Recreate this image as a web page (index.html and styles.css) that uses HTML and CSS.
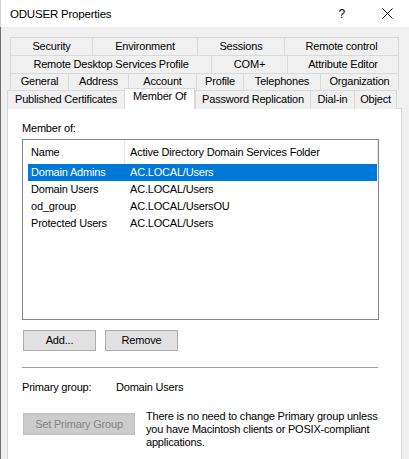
FILE: index.html
```html
<!DOCTYPE html>
<html>
<head>
<meta charset="utf-8">
<link rel="stylesheet" href="styles.css">
</head>
<body>
<div class="titlebar">
  <span class="title">ODUSER Properties</span>
  <span class="help">?</span>
  <svg class="close" width="11" height="11" viewBox="0 0 11 11"><path d="M0.5 0.5 L10.5 10.5 M10.5 0.5 L0.5 10.5" stroke="#000" stroke-width="1" fill="none"/></svg>
</div>
<div class="window">
  <div class="tabs">
    <div class="tabrow r1">
      <div class="tab">Security</div>
      <div class="tab">Environment</div>
      <div class="tab">Sessions</div>
      <div class="tab">Remote control</div>
    </div>
    <div class="tabrow r2">
      <div class="tab">Remote Desktop Services Profile</div>
      <div class="tab">COM+</div>
      <div class="tab">Attribute Editor</div>
    </div>
    <div class="tabrow r3">
      <div class="tab">General</div>
      <div class="tab">Address</div>
      <div class="tab">Account</div>
      <div class="tab">Profile</div>
      <div class="tab">Telephones</div>
      <div class="tab">Organization</div>
    </div>
    <div class="tabrow r4">
      <div class="tab">Published Certificates</div>
      <div class="tab active">Member Of</div>
      <div class="tab">Password Replication</div>
      <div class="tab">Dial-in</div>
      <div class="tab">Object</div>
    </div>
  </div>
  <div class="panel">
    <div class="label">Member of:</div>
    <div class="list">
      <div class="list-head">
        <div class="hcol first">Name</div>
        <div class="hcol">Active Directory Domain Services Folder</div>
      </div>
      <div class="rows">
        <div class="row selected"><span>Domain Admins</span><span>AC.LOCAL/Users</span></div>
        <div class="row"><span>Domain Users</span><span>AC.LOCAL/Users</span></div>
        <div class="row"><span>od_group</span><span>AC.LOCAL/UsersOU</span></div>
        <div class="row"><span>Protected Users</span><span>AC.LOCAL/Users</span></div>
      </div>
    </div>
    <div class="buttons">
      <div class="btn">Add...</div>
      <div class="btn">Remove</div>
    </div>
    <div class="sep"></div>
    <div class="primary">
      <span>Primary group:</span>
      <span>Domain Users</span>
    </div>
    <div class="setrow">
      <div class="btn disabled wide">Set Primary Group</div>
      <p class="note">There is no need to change Primary group unless<br>you have Macintosh clients or POSIX-compliant<br>applications.</p>
    </div>
  </div>
</div>
</body>
</html>
```

FILE: styles.css
```css
* { box-sizing: border-box; }
html, body { margin: 0; padding: 0; }
body {
  width: 409px;
  height: 459px;
  overflow: hidden;
  background: #f0f0f0;
  font-family: "Liberation Sans", Arial, sans-serif;
  font-size: 11px;
  letter-spacing: -0.2px;
  color: #000;
}
.titlebar {
  height: 27px;
  background: #fff;
  display: flex;
  align-items: center;
  padding-left: 9px;
  border-left: 1px solid #d0d0d0;
}
.title { font-size: 11.5px; flex: 1; }
.help { font-size: 12px; margin-right: 37px; }
.close { margin-right: 16px; }
.window {
  height: 432px;
  border-left: 1px solid #6f6f6f;
  padding-top: 10px;
}
.tabrow { display: grid; }
.r1 { margin-left: 9px; height: 18px; grid-template-columns: 82px 105px 87px 115px; }
.r2 { margin-left: 9px; height: 18px; grid-template-columns: 201px 76px 112px; }
.r3 { margin-left: 9px; height: 17px; grid-template-columns: 58px 60px 68px 47px 77px 79px; }
.r4 { margin-left: 6px; height: 18px; grid-template-columns: 117px 71px 115px 44px 43px; }
.tab {
  border-top: 1px solid #d9d9d9;
  border-left: 1px solid #d9d9d9;
  text-align: center;
  line-height: 16px;
  white-space: nowrap;
  background: #f0f0f0;
}
.tab:last-child { border-right: 1px solid #d9d9d9; }
.r3 .tab { line-height: 15px; }
.tab.active {
  position: relative;
  z-index: 1;
  align-self: start;
  height: 21px;
  margin-top: -2px;
  background: #fff;
  border-right: 1px solid #d9d9d9;
  line-height: 15px;
}
.panel {
  margin-left: 6px;
  width: 395px;
  height: 360px;
  background: #fff;
  border: 1px solid #d9d9d9;
  padding: 12px 0 0 14px;
}
.label { line-height: 14px; }
.list {
  margin-top: 4px;
  width: 357px;
  height: 181px;
  border: 1px solid #828790;
}
.list-head {
  display: grid;
  grid-template-columns: 102px 253px;
  height: 24px;
}
.hcol {
  line-height: 24px;
  padding-left: 5px;
  border-right: 1px solid #e5e5e5;
  white-space: nowrap;
}
.hcol.first { padding-left: 8px; }
.rows { margin: 0 1px 0 5px; }
.row {
  display: grid;
  grid-template-columns: 99px 1fr;
  height: 17px;
  line-height: 17px;
  padding-left: 3px;
  white-space: nowrap;
}
.row.selected { background: #0078d7; color: #fff; }
.buttons {
  display: flex;
  gap: 9px;
  margin-top: 10px;
  margin-left: 1px;
}
.btn {
  width: 73px;
  height: 21px;
  line-height: 19px;
  text-align: center;
  background: #e1e1e1;
  border: 1px solid #adadad;
  white-space: nowrap;
}
.btn.disabled {
  background: #cccccc;
  border-color: #bfbfbf;
  color: #838383;
}
.btn.wide { width: 112px; height: 22px; line-height: 20px; flex: none; }
.sep {
  margin-top: 16px;
  width: 356px;
  height: 1px;
  background: #a0a0a0;
}
.primary {
  margin-top: 12px;
  display: grid;
  grid-template-columns: 94px auto;
  line-height: 14px;
}
.setrow {
  margin-top: 16px;
  display: flex;
  align-items: flex-start;
}
.setrow .btn { margin-top: 3px; margin-left: 1px; }
.note {
  margin: 0 0 0 11px;
  line-height: 13px;
  white-space: nowrap;
}
```
